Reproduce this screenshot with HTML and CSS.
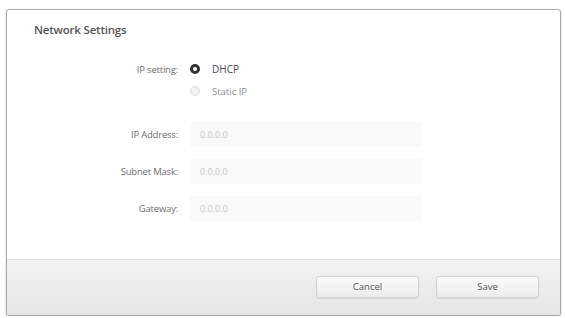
FILE: index.html
```html
<!DOCTYPE html>
<html>
<head>
    <link rel="stylesheet" href="styles.css">
</head>
<body>
    <div class="settings-dialog">
        <div class="settings-body">
            <h1 class="settings-title">Network Settings</h1>

            <div class="settings-form">
                <div class="settings-row">
                    <span class="settings-label">IP setting:</span>
                    <label class="settings-radio">
                        <span class="radio-dot checked"></span>
                        <span class="radio-text">DHCP</span>
                    </label>
                </div>
                <div class="settings-row radio-second">
                    <span class="settings-label"></span>
                    <label class="settings-radio">
                        <span class="radio-dot"></span>
                        <span class="radio-text muted">Static IP</span>
                    </label>
                </div>

                <div class="settings-row field-row first-field">
                    <span class="settings-label">IP Address:</span>
                    <input class="settings-input" type="text" placeholder="0.0.0.0" disabled>
                </div>
                <div class="settings-row field-row">
                    <span class="settings-label">Subnet Mask:</span>
                    <input class="settings-input" type="text" placeholder="0.0.0.0" disabled>
                </div>
                <div class="settings-row field-row">
                    <span class="settings-label">Gateway:</span>
                    <input class="settings-input" type="text" placeholder="0.0.0.0" disabled>
                </div>
            </div>
        </div>

        <div class="settings-footer">
            <button class="settings-button">Cancel</button>
            <button class="settings-button">Save</button>
        </div>
    </div>
</body>
</html>
```

FILE: styles.css
```css
* {
    margin: 0;
    padding: 0;
    box-sizing: border-box;
}

body {
    font-family: "Open Sans", "Liberation Sans", sans-serif;
    background-color: #fff;
    padding: 9px 4px 0 6px;
}

.settings-dialog {
    width: 555px;
    height: 307px;
    border: 1px solid #a9a9a9;
    border-radius: 3px;
    background: #fff;
    box-shadow: 0 1px 2px rgba(0, 0, 0, 0.25);
    display: flex;
    flex-direction: column;
    overflow: hidden;
}

.settings-body {
    flex: 1;
    padding: 13px 0 0 27px;
}

.settings-title {
    font-size: 11.5px;
    font-weight: 600;
    line-height: 14px;
    color: #555;
    letter-spacing: -0.2px;
}

.settings-form {
    margin-top: 23px;
}

.settings-row {
    display: flex;
    align-items: center;
    height: 18px;
}

.settings-label {
    width: 144px;
    text-align: right;
    font-size: 9.5px;
    color: #6e6e6e;
    letter-spacing: -0.2px;
    margin-right: 12px;
}

.radio-second {
    margin-top: 4px;
}

.settings-radio {
    display: flex;
    align-items: center;
}

.radio-dot {
    width: 10px;
    height: 10px;
    border-radius: 50%;
    border: 1px solid #ddd;
    background: #f3f3f3;
}

.radio-dot.checked {
    border: 3px solid #333;
    background: #fff;
}

.radio-text {
    margin-left: 12px;
    font-size: 10px;
    color: #4a4a4a;
}

.radio-text.muted {
    font-size: 9.5px;
    color: #8a8a8a;
}

.field-row {
    height: 25px;
    margin-top: 12px;
}

.first-field {
    margin-top: 22px;
}

.settings-input {
    width: 232px;
    height: 25px;
    border: none;
    border-radius: 2px;
    background: #f9f9f9;
    padding-left: 10px;
    font-family: inherit;
    font-size: 9px;
    color: #c8c8c8;
    outline: none;
}

.settings-input::placeholder {
    color: #c8c8c8;
}

.settings-footer {
    height: 56px;
    border-top: 1px solid #e2e2e2;
    background: linear-gradient(to bottom, #f2f2f2, #e6e6e6);
    display: flex;
    align-items: center;
    justify-content: flex-end;
    gap: 17px;
    padding: 0 21px 2px 0;
}

.settings-button {
    width: 103px;
    height: 22px;
    border: 1px solid #cfcfcf;
    border-radius: 3px;
    background: linear-gradient(to bottom, #fbfbfb, #ececec);
    box-shadow: 0 1px 1px rgba(0, 0, 0, 0.08);
    font-family: inherit;
    font-size: 9.5px;
    color: #555;
}
```
